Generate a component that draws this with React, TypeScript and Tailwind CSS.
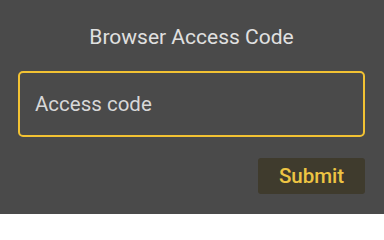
export default function App() {
  return (
    <div className="w-[384px] h-[214px] bg-[#4a4a4a] flex flex-col pl-[18px] pr-[19px] pt-[23px] font-['Roboto',sans-serif]">
      <div className="text-center text-[21px] leading-[28px] text-[#e0e0e0]">Browser Access Code</div>
      <div className="mt-[20px] h-[66px] rounded-[5px] border-2 border-[#f2c233] flex items-center px-[15px]">
        <span className="text-[20.5px] text-[#d8d8d8]">Access code</span>
      </div>
      <div className="flex justify-end mt-[21px]">
        <button className="w-[107px] h-[36px] rounded-[3px] bg-[#3f3b2d] text-[#edc443] text-[20.5px] font-medium">Submit</button>
      </div>
    </div>
  );
}
